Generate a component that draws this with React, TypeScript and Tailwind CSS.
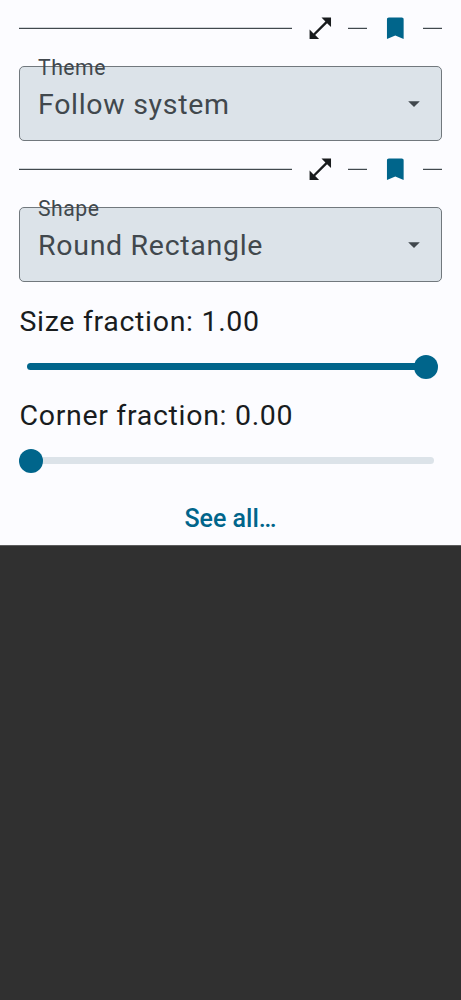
function Divider({ className }: { className: string }) {
  return <div className={`h-[2px] border-t border-b border-t-[#d0d4d8] border-b-[#41484d] ${className}`} />;
}

function SectionHeader() {
  return (
    <div className="flex h-14 items-center">
      <Divider className="-mt-px w-[273px]" />
      <svg viewBox="0 0 24 24" className="ml-[14px] size-[28.6px] shrink-0 fill-[#191c1e]">
        <path d="M21 11V3h-8l3.29 3.29-10 10L3 13v8h8l-3.29-3.29 10-10z" />
      </svg>
      <Divider className="-mt-px ml-[13.4px] w-[19px]" />
      <svg viewBox="0 0 24 24" className="ml-[14px] size-[28.6px] shrink-0 fill-[#00658b]">
        <path d="M17.4 3H6.6C5.6 3 5 3.6 5 4.6V21l7-3 7 3V4.6c0-1-.6-1.6-1.6-1.6z" />
      </svg>
      <Divider className="-mt-px ml-[13.4px] w-[19px]" />
    </div>
  );
}

function SelectField({ label, value }: { label: string; value: string }) {
  return (
    <div className="relative mt-[10px] flex h-[75px] items-center justify-between rounded-[5px] border border-[#71787d] bg-[#dce3e9] pr-[13px] pl-[18px] text-[#41484d]">
      <span className="absolute -top-[14px] left-[18px] translate-y-[0.5px] text-[21.2px] leading-[28px] tracking-[0.5px]">{label}</span>
      <span className="mt-[2px] text-[28.5px] leading-[36px] tracking-[0.7px]">{value}</span>
      <svg viewBox="0 0 24 24" className="size-[28px] fill-current">
        <path d="m7 9.6 5 5 5-5z" />
      </svg>
    </div>
  );
}

function Slider({ value }: { value: number }) {
  return (
    <div className="relative h-6 w-[419px]">
      <div className="absolute top-[8px] left-2 h-[7px] w-[407px] overflow-hidden rounded-full bg-[#dce3e9]">
        <div className="h-full bg-[#00658b]" style={{ width: `${value * 100}%` }} />
      </div>
      <div
        className="absolute top-0 size-[23.6px] rounded-full bg-[#00658b]"
        style={{ left: `${value * 395}px` }}
      />
    </div>
  );
}

export default function App() {
  return (
    <div className="min-h-[1000px] bg-[#303030] font-[Roboto,sans-serif]">
      <main className="flex h-[545px] flex-col bg-[#fcfcff] px-[19px] text-[#191c1e]">
        <SectionHeader />
        <SelectField label="Theme" value="Follow system" />
        <SectionHeader />
        <SelectField label="Shape" value="Round Rectangle" />
        <div className="mt-[22px] pl-[0.5px] text-[28.5px] leading-[36px] tracking-[0.69px]">Size fraction: 1.00</div>
        <div className="mt-[15px]">
          <Slider value={1} />
        </div>
        <div className="mt-[19px] pl-[0.5px] text-[28.5px] leading-[36px] tracking-[0.69px]">Corner fraction: 0.00</div>
        <div className="mt-[15px]">
          <Slider value={0} />
        </div>
        <button className="mt-[28px] self-center text-[25px] leading-[36px] font-medium tracking-[0px] text-[#00658b]">
          See all…
        </button>
      </main>
      <div className="h-px bg-[#5c5c5c]" />
    </div>
  );
}
